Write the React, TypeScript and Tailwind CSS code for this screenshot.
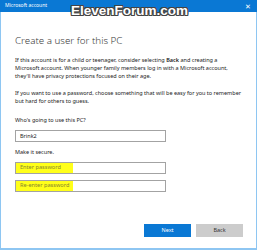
import React from "react";

const font = { fontFamily: '"Noto Sans", "Open Sans", sans-serif' };

const Field: React.FC<{ value?: string; placeholder?: string; mark?: boolean }> = ({
  value,
  placeholder,
  mark,
}) => (
  <div className="flex h-[12px] w-[151px] items-stretch border border-[#a3a3a3] bg-white">
    {mark ? (
      <div className="flex w-[57px] items-center bg-[#ffff1a] pl-[4px] text-[5.6px] text-[#86862e]">
        {placeholder}
      </div>
    ) : (
      <div className="flex items-center pl-[4px] text-[5.5px] text-[#222]">{value}</div>
    )}
  </div>
);

export default function App() {
  return (
    <div className="relative h-[250px] w-[258px] bg-white" style={font}>
      <div className="flex h-[250px] w-[257px] flex-col border-x border-b-2 border-[#8ec6f2]">
        {/* title bar */}
        <div className="-mx-px flex h-[12px] items-center justify-between bg-[#0a78d4] pl-[5px] pr-[6px] text-white">
          <span className="text-[5px]">Microsoft account</span>
          <span className="text-[7px] leading-none">✕</span>
        </div>

        <div className="flex flex-1 flex-col pl-[14px] pr-[11px] text-[#1b1b1b]">
          <h1 className="mt-[22px] text-[9.8px] font-light leading-[14px] text-[#3a3a3a]">
            Create a user for this PC
          </h1>

          <p className="mt-[9px] text-[5.5px] leading-[7.8px]">
            If this account is for a child or teenager, consider selecting{" "}
            <b className="font-semibold">Back</b> and creating a
            <br />
            Microsoft account. When younger family members log in with a Microsoft account,
            <br />
            they'll have privacy protections focused on their age.
          </p>

          <p className="mt-[10px] text-[5.5px] leading-[7.8px]">
            If you want to use a password, choose something that will be easy for you to remember
            <br />
            but hard for others to guess.
          </p>

          <p className="mt-[11px] text-[5.5px] leading-[7.8px]">Who's going to use this PC?</p>
          <div className="mt-[5px]">
            <Field value="Brink2" />
          </div>

          <p className="mt-[7px] text-[5.5px] leading-[7.8px]">Make it secure.</p>
          <div className="mt-[5px] flex flex-col gap-[6px]">
            <Field placeholder="Enter password" mark />
            <Field placeholder="Re-enter password" mark />
          </div>

          <div className="mt-[32px] flex justify-end gap-[5px] pr-[2px]">
            <button className="h-[13px] w-[47px] bg-[#0a78d4] text-[5.5px] text-white">Next</button>
            <button className="h-[13px] w-[47px] bg-[#cccccc] text-[5.5px] text-[#333]">Back</button>
          </div>
        </div>
      </div>

      {/* forum watermark */}
      <div
        className="absolute left-[71px] top-[4px] text-[13.5px] font-bold leading-none text-white"
        style={{
          fontFamily: '"Liberation Sans", Arial, sans-serif',
          textShadow:
            "1px 0 0 #444, -1px 0 0 #444, 0 1px 0 #444, 0 -1px 0 #444, 1px 1px 0 #444, -1px -1px 0 #444, 1px -1px 0 #444, -1px 1px 0 #444",
        }}
      >
        ElevenForum.com
      </div>
    </div>
  );
}
